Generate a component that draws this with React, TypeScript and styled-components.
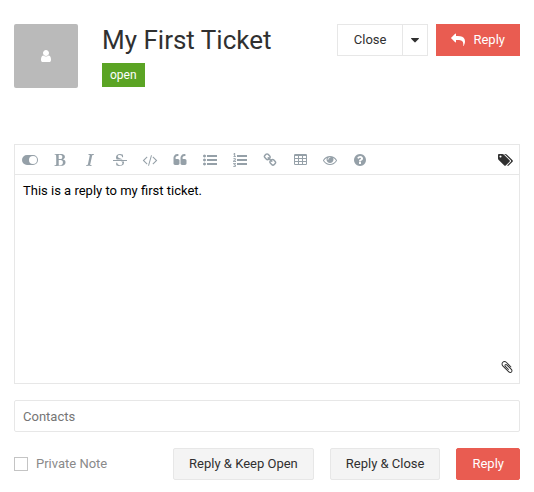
import React from 'react';
import styled, { createGlobalStyle, css } from 'styled-components';

const Global = createGlobalStyle`
  *, *::before, *::after { box-sizing: border-box; }
  body {
    margin: 0;
    background: #fff;
    color: #303030;
    font: 13px/20px Roboto, "Liberation Sans", sans-serif;
  }
  button, input, textarea { font: inherit; color: inherit; margin: 0; }
`;

const Page = styled.main`
  display: flex;
  flex-direction: column;
  gap: 16px;
  padding: 24px 14px 12px;
`;

const Header = styled.header`
  display: flex;
  align-items: flex-start;
  gap: 24px;
  margin-bottom: 40px;
`;

const Avatar = styled.div`
  display: flex;
  align-items: center;
  justify-content: center;
  flex: none;
  width: 64px;
  height: 64px;
  border-radius: 2px;
  background: #bababa;
  color: #fff;
`;

const Heading = styled.div`
  flex: 1;
  display: flex;
  flex-direction: column;
  align-items: flex-start;
  gap: 7px;
`;

const Title = styled.h1`
  margin: 0;
  font-size: 26px;
  font-weight: 400;
  line-height: 32px;
`;

const Badge = styled.span`
  padding: 0 8px;
  background: #5ba424;
  color: #fff;
  font-size: 12px;
  line-height: 24px;
`;

const Actions = styled.div`
  display: flex;
  gap: 8px;
`;

const SplitButton = styled.div`
  display: flex;
`;

type Variant = 'plain' | 'soft' | 'primary';

const variants = {
  plain: css`
    border-color: #e7e7e7;
    background: #fff;
  `,
  soft: css`
    border-color: #e7e7e7;
    background: #f4f4f4;
  `,
  primary: css`
    border-color: #e95c51;
    background: #e95c51;
    color: #fff;
  `,
};

const Button = styled.button<{ $variant: Variant; $rounded?: boolean; $pad?: number }>`
  display: flex;
  align-items: center;
  justify-content: center;
  gap: 8px;
  height: 32px;
  padding: 0 ${p => p.$pad ?? 15}px;
  border: 1px solid;
  border-radius: ${p => (p.$rounded ? 2 : 0)}px;
  white-space: nowrap;
  cursor: pointer;
  ${p => variants[p.$variant]}
`;

const MenuButton = styled(Button)`
  width: 26px;
  margin-left: -1px;
`;

const Editor = styled.section`
  position: relative;
  display: flex;
  flex-direction: column;
  border: 1px solid #e7e7e7;
`;

const Toolbar = styled.div`
  display: flex;
  border-bottom: 1px solid #e7e7e7;
  color: #95a0a8;
`;

const Tool = styled.button<{ $end?: boolean }>`
  display: flex;
  align-items: center;
  justify-content: center;
  width: 30px;
  height: 29px;
  padding: 0;
  border: 0;
  background: none;
  cursor: pointer;
  ${p => p.$end && css`
    width: 28px;
    margin-left: auto;
    color: #303030;
  `}
`;

const Message = styled.textarea`
  display: block;
  width: 100%;
  height: 208px;
  padding: 6px 8px;
  border: 0;
  outline: 0;
  resize: none;
  background: transparent;
  color: #000;
`;

const Attach = styled.button`
  position: absolute;
  right: 5px;
  bottom: 9px;
  display: flex;
  padding: 0;
  border: 0;
  background: none;
  cursor: pointer;
`;

const Contacts = styled.input`
  width: 100%;
  height: 32px;
  padding: 0 8px;
  border: 1px solid #e7e7e7;
  border-radius: 2px;
  outline: 0;
  &::placeholder { color: #757575; opacity: 1; }
`;

const Footer = styled.footer`
  display: flex;
  gap: 16px;
`;

const Note = styled.label`
  display: flex;
  align-items: center;
  gap: 8px;
  margin-right: auto;
  color: #8a8a8a;
`;

const Checkbox = styled.input`
  appearance: none;
  width: 14px;
  height: 14px;
  border: 1px solid #c4c4c4;
  background: #fff;
  &:checked { background: #8a8a8a; }
`;

const Svg = styled.svg`
  display: block;
  flex: none;
  height: 14px;
  fill: currentColor;
`;

const bar = (y: number) =>
  `M1792 ${y}v192q0 13-9.5 22.5t-22.5 9.5h-1216q-13 0-22.5-9.5t-9.5-22.5v-192q0-13 9.5-22.5t22.5-9.5h1216q13 0 22.5 9.5t9.5 22.5z`;
const dot = (y: number) =>
  `M384 ${y}q0 80-56 136t-136 56-136-56-56-136 56-136 136-56 136 56 56 136z`;
const quote = (x: number) =>
  `M${x} 960v384q0 80-56 136t-136 56h-384q-80 0-136-56t-56-136v-704q0-104 40.5-198.5t109.5-163.5 163.5-109.5 198.5-40.5h64q26 0 45 19t19 45v128q0 26-19 45t-45 19h-64q-106 0-181 75t-75 181v32q0 40 28 68t68 28h224q80 0 136 56t56 136z`;
const cell = (x: number, y: number) =>
  `M${x} ${y}h320q32 0 32 32v192q0 32-32 32h-320q-32 0-32-32v-192q0-32 32-32z`;
const cells = [160, 672, 1184].flatMap(x => [384, 768, 1152].map(y => cell(x, y))).join('');

const icons: Record<string, { width: number; d: string }> = {
  user: { width: 1792, d: 'M1536 1399q0 109-62.5 187t-150.5 78h-854q-88 0-150.5-78t-62.5-187q0-85 8.5-160.5t31.5-152 58.5-131 94-89 134.5-34.5q131 128 313 128t313-128q76 0 134.5 34.5t94 89 58.5 131 31.5 152 8.5 160.5zm-256-887q0 159-112.5 271.5t-271.5 112.5-271.5-112.5-112.5-271.5 112.5-271.5 271.5-112.5 271.5 112.5 112.5 271.5z' },
  reply: { width: 1792, d: 'M1792 1120q0 166-127 451-3 7-10.5 24t-13.5 30-13 22q-12 17-28 17-15 0-23.5-10t-8.5-25q0-9 2.5-26.5t2.5-23.5q5-68 5-123C1578 1020 1340 896 864 896h-224v256q0 26-19 45t-45 19-45-19l-512-512q-19-19-19-45t19-45l512-512q19-19 45-19t45 19 19 45v256h224q713 0 875 403 53 134 53 333z' },
  caret: { width: 1024, d: 'M1024 704q0 26-19 45l-448 448q-19 19-45 19t-45-19l-448-448q-19-19-19-45t19-45 45-19h896q26 0 45 19t19 45z' },
  toggle: { width: 2048, d: 'M640 256h768a640 640 0 0 1 0 1280h-768a640 640 0 0 1 0-1280zM1408 384a512 512 0 1 0 0 1024a512 512 0 1 0 0-1024z' },
  bold: { width: 1792, d: 'M747 1521q74 32 140 32 376 0 376-335 0-114-41-180-27-44-61.5-74t-67.5-46.5-80.5-25-84-10.5-94.5-2q-73 0-101 10 0 53-.5 159t-.5 158q0 8-1 67.5t-.5 96.5 4.5 83.5 12 66.5zm-14-746q42 7 109 7 82 0 143-13t110-44.5 74.5-89.5 25.5-142q0-70-29-122.5t-79-82-108-43.5-124-14q-50 0-130 13 0 50 4 151t4 152q0 27-.5 80t-.5 79q0 46 1 69zm-541 889l2-94q15-4 85-16t106-27q7-12 12.5-27t8.5-33.5 5.5-32.5 3-37.5.5-34v-65.5q0-982-22-1025-4-8-22-14.5t-44.5-11-49.5-7-48.5-4.5-30.5-3l-4-83q98-2 340-11.5t373-9.5q23 0 68.5.5t67.5.5q70 0 136.5 13t128.5 42 108 71 74 104.5 28 137.5q0 52-16.5 95.5t-39 72-64.5 57.5-73 45-84 40q154 35 256.5 134t102.5 248q0 100-35 179.5t-93.5 130.5-138 85.5-163.5 48.5-176 14q-44 0-132-3t-132-3q-106 0-307 11t-231 12z' },
  italic: { width: 1792, d: 'M384 1662l17-85q6-2 81.5-21.5t111.5-37.5q28-35 41-101 1-7 62-289t114-543.5 52-296.5v-25q-24-13-54.5-18.5t-69.5-8-58-5.5l19-103q33 2 120 6.5t149.5 7 120.5 2.5q48 0 98.5-2.5t121-7 98.5-6.5q-5 39-19 89-30 10-101.5 28.5t-108.5 33.5q-8 19-14 42.5t-9 40-7.5 45.5-6.5 42q-27 148-87.5 419.5t-77.5 355.5q-2 9-13 58t-20 90-16 83.5-6 57.5l1 18q17 4 185 31-3 44-16 99-11 0-32.5 1.5t-32.5 1.5q-29 0-87-10t-86-10q-138-2-206-2-51 0-143 9t-121 11z' },
  strike: { width: 1792, d: 'M1760 896q14 0 23 9t9 23v64q0 14-9 23t-23 9h-1728q-14 0-23-9t-9-23v-64q0-14 9-23t23-9h1728zm-1277-64q-28-35-51-80-48-97-48-188 0-181 134-309 133-127 393-127 50 0 167 19 66 12 177 48 10 38 21 118 14 123 14 183 0 18-5 45l-12 3-84-6-14-2q-50-149-103-205-88-91-210-91-114 0-182 59-67 58-67 146 0 73 66 140t279 129q69 20 173 66 58 28 95 52h-743zm507 256h411q7 39 7 92 0 111-41 212-23 55-71 104-37 35-109 81-80 48-153 66-80 21-203 21-114 0-195-23l-140-40q-57-16-72-28-8-8-8-22v-13q0-108-2-156-1-30 0-68l2-37v-44l102-2q15 34 30 71t22.5 56 12.5 27q35 57 80 94 43 36 105 57 59 22 132 22 64 0 139-27 77-26 122-86 47-61 47-129 0-84-81-157-34-29-137-71z' },
  code: { width: 2048, d: 'M681 1399l-50 50q-10 10-23 10t-23-10l-466-466q-10-10-10-23t10-23l466-466q10-10 23-10t23 10l50 50q10 10 10 23t-10 23l-393 393 393 393q10 10 10 23t-10 23zm591-1067l-373 1291q-4 13-15.5 19.5t-23.5 2.5l-62-17q-13-4-19.5-15.5t-2.5-24.5l373-1291q4-13 15.5-19.5t23.5-2.5l62 17q13 4 19.5 15.5t2.5 24.5zm657 651l-466 466q-10 10-23 10t-23-10l-50-50q-10-10-10-23t10-23l393-393-393-393q-10-10-10-23t10-23l50-50q10-10 23-10t23 10l466 466q10 10 10 23t-10 23z' },
  quote: { width: 1792, d: quote(832) + quote(1728) },
  bullets: { width: 1792, d: dot(384) + dot(896) + dot(1408) + bar(288) + bar(800) + bar(1312) },
  numbers: { width: 1792, d: 'M381 1620q0 80-54.5 126t-135.5 46q-106 0-172-66l57-88q49 45 106 45 29 0 50.5-14.5t21.5-42.5q0-64-105-56l-26-56q8-10 32.5-43.5t42.5-54 37-38.5v-1q-16 0-48.5 1t-48.5 1v53h-106v-152h333v88l-95 115q51 12 81 49t30 88zm2-627v159h-362q-6-36-6-54 0-51 23.5-93t56.5-68 66-47.5 56.5-43.5 23.5-45q0-25-14.5-38.5t-39.5-13.5q-46 0-81 58l-85-59q24-51 71.5-79.5t105.5-28.5q73 0 123 41.5t50 112.5q0 50-34 91.5t-75 64.5-75.5 50.5-35.5 52.5h127v-60h105zM384 413v99h-335v-99h107q0-41 .5-121.5t.5-121.5v-12h-2q-8 17-50 54l-71-76 136-127h106v404h108z' + bar(288) + bar(800) + bar(1312) },
  link: { width: 1792, d: 'M1520 1216q0-40-28-68l-208-208q-28-28-68-28-42 0-72 32 3 3 19 18.5t21.5 21.5 15 19 13 25.5 3.5 27.5q0 40-28 68t-68 28q-15 0-27.5-3.5t-25.5-13-19-15-21.5-21.5-18.5-19q-33 31-33 73 0 40 28 68l206 207q27 27 68 27 40 0 68-26l147-146q28-28 28-67zm-703-705q0-40-28-68l-206-207q-28-28-68-28-39 0-68 27l-147 146q-28 28-28 67 0 40 28 68l208 208q27 27 68 27 42 0 72-31-3-3-19-18.5t-21.5-21.5-15-19-13-25.5-3.5-27.5q0-40 28-68t68-28q15 0 27.5 3.5t25.5 13 19 15 21.5 21.5 18.5 19q33-31 33-73zm895 705q0 120-85 203l-147 146q-83 83-203 83-121 0-204-85l-206-207q-83-83-83-203 0-123 88-209l-88-88q-86 88-208 88-120 0-204-84l-208-208q-84-84-84-204t85-203l147-146q83-83 203-83 121 0 204 85l206 207q83 83 83 203 0 123-88 209l88 88q86-88 208-88 120 0 204 84l208 208q84 84 84 204z' },
  table: { width: 1664, d: 'M160 128h1344q160 0 160 160v1088q0 160-160 160h-1344q-160 0-160-160v-1088q0-160 160-160z' + cells },
  eye: { width: 1792, d: 'M1664 960q-152-236-381-353 61 104 61 225 0 185-131.5 316.5t-316.5 131.5-316.5-131.5-131.5-316.5q0-121 61-225-229 117-381 353 133 205 333.5 326.5t434.5 121.5 434.5-121.5 333.5-326.5zm-720-384q0-20-14-34t-34-14q-125 0-214.5 89.5t-89.5 214.5q0 20 14 34t34 14 34-14 14-34q0-86 61-147t147-61q20 0 34-14t14-34zm848 384q0 34-20 69-140 230-376.5 368.5t-499.5 138.5-499.5-139-376.5-368q-20-35-20-69t20-69q140-229 376.5-368t499.5-139 499.5 139 376.5 368q20 35 20 69z' },
  help: { width: 1792, d: 'M1024 1376v-192q0-14-9-23t-23-9h-192q-14 0-23 9t-9 23v192q0 14 9 23t23 9h192q14 0 23-9t9-23zm256-672q0-88-55.5-163t-138.5-116-170-41q-243 0-371 213-15 24 8 42l132 100q7 6 19 6 16 0 25-12 53-68 86-92 34-24 86-24 48 0 85.5 26t37.5 59q0 38-20 61t-68 45q-63 28-115.5 86.5t-52.5 125.5v36q0 14 9 23t23 9h192q14 0 23-9t9-23q0-19 21.5-49.5t54.5-49.5q32-18 49-28.5t46-35 44.5-48 28-60.5 12.5-81zm384 192q0 209-103 385.5t-279.5 279.5-385.5 103-385.5-103-279.5-279.5-103-385.5 103-385.5 279.5-279.5 385.5-103 385.5 103 279.5 279.5 103 385.5z' },
  tags: { width: 1920, d: 'M448 448q0-53-37.5-90.5t-90.5-37.5-90.5 37.5-37.5 90.5 37.5 90.5 90.5 37.5 90.5-37.5 37.5-90.5zm1067 576q0 53-37 90l-491 492q-39 37-91 37-53 0-90-37l-715-716q-38-37-64.5-101t-26.5-117v-416q0-52 38-90t90-38h416q53 0 117 26.5t102 64.5l715 714q37 39 37 91zm384 0q0 53-37 90l-491 492q-39 37-91 37-36 0-59-14t-53-45l470-470q37-37 37-90 0-52-37-91l-715-714q-38-38-102-64.5t-117-26.5h224q53 0 117 26.5t102 64.5l715 714q37 39 37 91z' },
  clip: { width: 1792, d: 'M1596 1385q0 117-79 196t-196 79q-135 0-235-100l-777-776q-113-115-113-271 0-159 110-270t269-111q158 0 273 113l605 606q10 10 10 22 0 16-30.5 46.5t-46.5 30.5q-13 0-23-10l-606-607q-79-77-181-77-106 0-179 75t-73 181q0 105 76 181l776 777q63 63 145 63 64 0 106-42t42-106q0-82-63-145l-581-581q-26-24-60-24-29 0-48 19t-19 48q0 32 25 59l410 410q10 10 10 22 0 16-31 47t-47 31q-12 0-22-10l-410-410q-63-61-63-149 0-82 57-139t139-57q88 0 149 63l581 581q100 98 100 235z' },
};

const Icon = ({ name }: { name: string }) => (
  <Svg viewBox={`0 0 ${icons[name].width} 1792`} aria-hidden="true">
    <path fillRule="evenodd" d={icons[name].d} />
  </Svg>
);

const tools = [
  ['toggle', 'Toggle editor'],
  ['bold', 'Bold'],
  ['italic', 'Italic'],
  ['strike', 'Strikethrough'],
  ['code', 'Code'],
  ['quote', 'Quote'],
  ['bullets', 'Bulleted list'],
  ['numbers', 'Numbered list'],
  ['link', 'Link'],
  ['table', 'Table'],
  ['eye', 'Preview'],
  ['help', 'Help'],
];

export default function App() {
  return (
    <>
      <Global />
      <Page>
        <Header>
          <Avatar><Icon name="user" /></Avatar>
          <Heading>
            <Title>My First Ticket</Title>
            <Badge>open</Badge>
          </Heading>
          <Actions>
            <SplitButton>
              <Button type="button" $variant="plain" $pad={16}>Close</Button>
              <MenuButton type="button" $variant="plain" $pad={0} aria-label="More close options">
                <Icon name="caret" />
              </MenuButton>
            </SplitButton>
            <Button type="button" $variant="primary" $pad={14}><Icon name="reply" />Reply</Button>
          </Actions>
        </Header>

        <Editor>
          <Toolbar>
            {tools.map(([name, label]) => (
              <Tool key={name} type="button" aria-label={label}><Icon name={name} /></Tool>
            ))}
            <Tool type="button" aria-label="Tags" $end><Icon name="tags" /></Tool>
          </Toolbar>
          <Message aria-label="Reply message" defaultValue="This is a reply to my first ticket." />
          <Attach type="button" aria-label="Attach a file"><Icon name="clip" /></Attach>
        </Editor>

        <Contacts type="text" placeholder="Contacts" aria-label="Contacts" />

        <Footer>
          <Note><Checkbox type="checkbox" />Private Note</Note>
          <Button type="button" $variant="soft" $rounded>Reply &amp; Keep Open</Button>
          <Button type="button" $variant="soft" $rounded>Reply &amp; Close</Button>
          <Button type="button" $variant="primary" $rounded>Reply</Button>
        </Footer>
      </Page>
    </>
  );
}
